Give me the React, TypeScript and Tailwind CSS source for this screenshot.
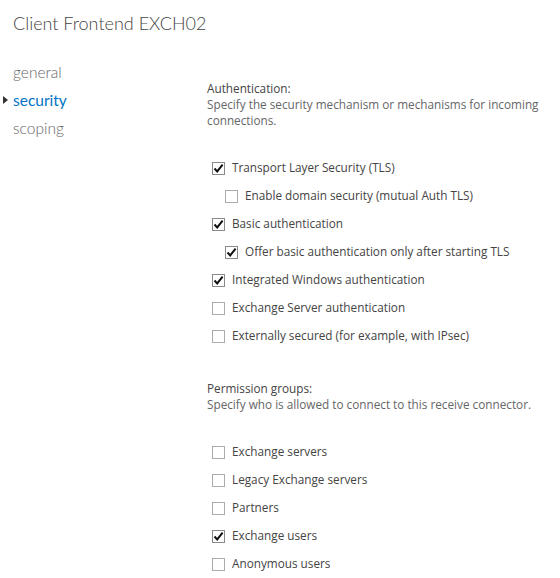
import type { ReactNode } from 'react'

const font = { fontFamily: '"Open Sans", "Noto Sans", sans-serif' }
const light = { fontFamily: 'Lato, "Open Sans", sans-serif' }

function Check({ checked }: { checked: boolean }) {
  return (
    <span
      className={`flex h-[13px] w-[13px] shrink-0 items-center justify-center border bg-white ${
        checked ? 'border-[#8a8a8a]' : 'border-[#ababab]'
      }`}
    >
      {checked && (
        <svg width="11" height="11" viewBox="0 0 11 11">
          <path d="M1.5 5.5 L4.2 8.4 L9.6 1.6" fill="none" stroke="#111" strokeWidth="2" />
        </svg>
      )}
    </span>
  )
}

function Option({ label, checked, indent }: { label: string; checked?: boolean; indent?: boolean }) {
  return (
    <div className={`flex h-[28px] items-center gap-[7px] ${indent ? 'pl-[18px]' : 'pl-[5px]'}`}>
      <Check checked={!!checked} />
      <span className="text-[11.75px] text-[#444]">{label}</span>
    </div>
  )
}

function Section({ title, desc, children }: { title: string; desc: ReactNode; children: ReactNode }) {
  return (
    <div>
      <div className="text-[11.75px] leading-[16px] text-[#444]">{title}</div>
      <div className="text-[11.75px] leading-[16px] text-[#666]">{desc}</div>
      <div className="mt-[26px]">{children}</div>
    </div>
  )
}

export default function App() {
  return (
    <div className="h-[578px] w-[560px] overflow-hidden bg-white" style={font}>
      <h1 className="pl-[13px] pt-[9px] text-[18px] font-light leading-[28px] text-[#444]" style={light}>
        Client Frontend EXCH02
      </h1>
      <div className="mt-[21px] flex">
        <nav className="w-[207px] shrink-0 text-[15.5px] font-light leading-[28px]" style={light}>
          <div className="pl-[13px] text-[#666]">general</div>
          <div className="relative pl-[13px] font-normal text-[#0072c6]">
            <span className="absolute left-[3px] top-[10px] h-0 w-0 border-y-[4px] border-l-[5px] border-y-transparent border-l-[#333]" />
            security
          </div>
          <div className="pl-[13px] text-[#666]">scoping</div>
        </nav>
        <main className="flex flex-col gap-[30px] pt-[22px]">
          <Section
            title="Authentication:"
            desc={
              <>
                Specify the security mechanism or mechanisms for incoming
                <br />
                connections.
              </>
            }
          >
            <Option label="Transport Layer Security (TLS)" checked />
            <Option label="Enable domain security (mutual Auth TLS)" indent />
            <Option label="Basic authentication" checked />
            <Option label="Offer basic authentication only after starting TLS" checked indent />
            <Option label="Integrated Windows authentication" checked />
            <Option label="Exchange Server authentication" />
            <Option label="Externally secured (for example, with IPsec)" />
          </Section>
          <Section title="Permission groups:" desc="Specify who is allowed to connect to this receive connector.">
            <Option label="Exchange servers" />
            <Option label="Legacy Exchange servers" />
            <Option label="Partners" />
            <Option label="Exchange users" checked />
            <Option label="Anonymous users" />
          </Section>
        </main>
      </div>
    </div>
  )
}
